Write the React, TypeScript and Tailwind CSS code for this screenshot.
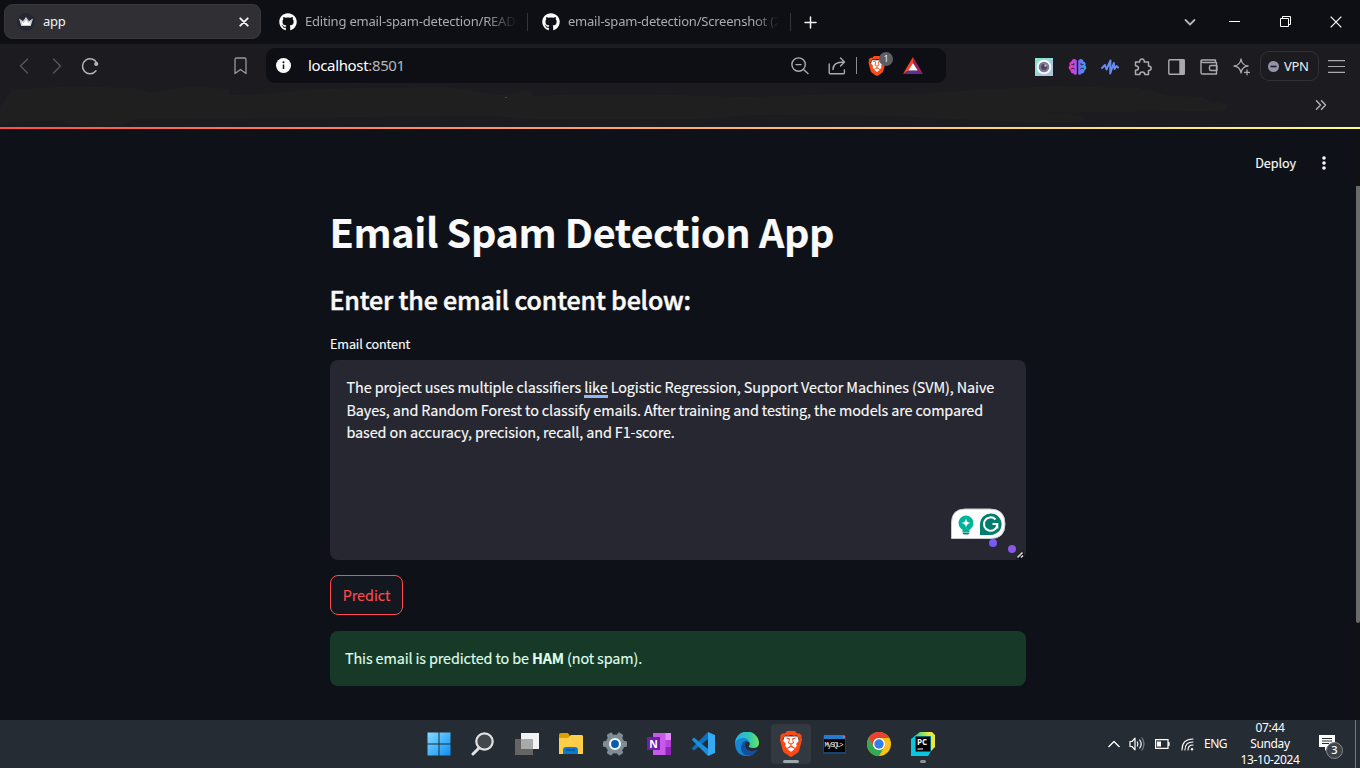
import type { ReactNode } from 'react';
import { FaGithub } from 'react-icons/fa';
import { SiBrave } from 'react-icons/si';

const stroke = { fill: 'none', stroke: 'currentColor', strokeLinecap: 'round', strokeLinejoin: 'round' } as const;

function Brave({ size }: { size: number }) {
  return (
    <svg width={size} height={size} viewBox="0 0 24 24">
      <path d="M6 5h12l1.500 5-3 9L12 22l-4.500-3-3-9z" fill="#fff" />
      <SiBrave size={24} color="#fb4a16" />
    </svg>
  );
}

function TabStrip() {
  return (
    <header className="flex h-11 shrink-0 items-start bg-[#0d0f14] font-['Noto_Sans','Open_Sans',sans-serif] text-[13px] text-[#a9abaf]">
      <div className="ml-1 mt-1 flex h-[35px] w-[257px] items-center rounded-[9px] bg-[#302f34] pl-[13px] text-[#f2f2f3] shadow-[inset_0_0_0_1px_#38383c]">
        <svg width="18" height="18" viewBox="0 0 18 18">
          <circle cx="9" cy="9" r="9" fill="#252633" />
          <path d="M2 5.500l4 2.500 3-4 3 4 4-2.500-2.200 7.500H4.200z" fill="#c9c9cc" />
          <path d="M4.500 9l2.300 1L9 7l2.200 3 2.300-1-1 3h-7z" fill="#fff" />
        </svg>
        <span className="ml-[8px] tracking-[-0.3px]">app</span>
        <svg className="ml-auto mr-[12px]" width="10" height="10" viewBox="0 0 10 10" {...stroke} strokeWidth="1.9"><path d="M1.300 1.300l7.400 7.400M8.700 1.300L1.300 8.700" /></svg>
      </div>
      <div className="mt-[13px] flex h-[18px] w-[266px] items-center pl-[18px]">
        <FaGithub size={18} color="#fff" className="shrink-0" />
        <span className="ml-[8px] w-[212px] whitespace-nowrap tracking-[-0.2px] [mask-image:linear-gradient(to_right,#000_85%,transparent)]">Editing email-spam-detection/READ</span>
      </div>
      <div className="mt-[13px] flex h-[18px] w-[263px] items-center border-l border-[#323438] pl-[14px]">
        <FaGithub size={18} color="#fff" className="shrink-0" />
        <span className="ml-[8px] w-[211px] whitespace-nowrap tracking-[-0.22px] [mask-image:linear-gradient(to_right,#000_88%,transparent)]">email-spam-detection/Screenshot (2</span>
      </div>
      <div className="mt-[13px] h-[18px] w-px bg-[#323438]" />
      <svg className="ml-[13px] mt-[15.500px] text-[#f2f2f2]" width="13" height="13" viewBox="0 0 13 13" {...stroke} strokeWidth="1.500"><path d="M6.500 1v11M1 6.500h11" /></svg>
      <div className="ml-auto mt-[15px] flex items-center text-white">
        <svg className="mr-[33px] text-[#b4b4b6]" width="12" height="14" viewBox="0 0 12 14" {...stroke} strokeWidth="1.800"><path d="M1.500 5l4.500 4.500L10.500 5" /></svg>
        <svg className="mr-[40px]" width="11" height="12" viewBox="0 0 11 12"><path d="M0 5.500h11" stroke="#fff" /></svg>
        <svg className="mr-[39px]" width="11" height="12" viewBox="0 0 11 12" fill="none" stroke="#fff"><path d="M.5 2.500h8v8h-8zM2.500 2V.5h8v8H9" /></svg>
        <svg className="mr-[18px]" width="12" height="12" viewBox="0 0 12 12" fill="none" stroke="#fff" strokeWidth="1.200"><path d="M.7.7l10.600 10.600M11.300.7L.7 11.300" /></svg>
      </div>
    </header>
  );
}

function Brain() {
  return (
    <svg width="19" height="18" viewBox="0 0 19 18">
      <defs><linearGradient id="brain"><stop offset="0" stopColor="#ff31b8" /><stop offset=".5" stopColor="#8d5cf6" /><stop offset="1" stopColor="#28a7f2" /></linearGradient></defs>
      <path d="M8.800 2.500C7-.3 3.600.9 3.500 3.500 1.500 4 .8 6 1.800 7.500.1 9 .6 11.600 2.500 12.200c-.2 2.500 1.600 3.600 3 3.300 1 2 3.300 1.500 3.300 0zM10.200 2.500c1.800-2.800 5.200-1.600 5.300 1 2 .5 2.700 2.500 1.700 4 1.700 1.500 1.200 4.100-.7 4.700.2 2.500-1.600 3.600-3 3.300-1 2-3.300 1.500-3.300 0z" fill="url(#brain)" />
      <path d="M3.500 6.500l2.500.3V5M3 11l2.500-1 1 1.500M15.500 6.500l-2.500.3V5M16 11l-2.500-1-1 1.500" stroke="#1c1b1f" fill="none" strokeWidth=".8" />
    </svg>
  );
}

function Ext({ children }: { children: ReactNode }) {
  return <div className="flex w-[33px] shrink-0 justify-center">{children}</div>;
}

function Toolbar() {
  return (
    <div className="flex h-[44px] shrink-0 items-center bg-[#1c1b1f] text-[#aaabae]">
      <div className="flex w-[266px] items-center text-[#56575b]">
        <svg className="ml-[19px]" width="10" height="16" viewBox="0 0 10 16" {...stroke} strokeWidth="1.400"><path d="M8.500 1L1.500 8l7 7" /></svg>
        <svg className="ml-[23px]" width="10" height="16" viewBox="0 0 10 16" {...stroke} strokeWidth="1.400"><path d="M1.500 1l7 7-7 7" /></svg>
        <svg className="ml-[19px] text-[#b4b5b7]" width="18" height="18" viewBox="0 0 18 18" {...stroke} strokeWidth="1.500"><path d="M15.800 6A7.500 7.500 0 1 0 15 13.800" /><circle cx="15.200" cy="7" r="2.100" fill="currentColor" stroke="none" /></svg>
        <svg className="ml-[135px] text-[#98999c]" width="13" height="18" viewBox="0 0 13 18" {...stroke} strokeWidth="1.300"><path d="M1 2.500Q1 1 2.500 1h8Q12 1 12 2.500V16.500l-5.500-4L1 16.500z" /></svg>
      </div>
      <div className="mb-px flex h-[35px] w-[680px] items-center rounded-[9px] bg-[#0d0f14] pl-[10px]">
        <svg width="15" height="15" viewBox="0 0 15 15"><circle cx="7.500" cy="7.500" r="7.500" fill="#fff" /><path d="M7.500 6.500v4.500" stroke="#0d0f14" strokeWidth="1.500" /><circle cx="7.500" cy="4.200" r="1" fill="#0d0f14" /></svg>
        <span className="mb-px ml-[17px] font-['Noto_Sans','Open_Sans',sans-serif] text-[15px] tracking-[-0.35px] text-white">localhost<span className="text-[#b5b6b8]">:8501</span></span>
        <div className="ml-auto flex items-center">
          <svg className="mr-[19px]" width="18" height="18" viewBox="0 0 18 18" {...stroke} strokeWidth="1.400"><circle cx="7.600" cy="7.600" r="6.700" /><path d="M12.500 12.500l4.500 4M5 7.600h5" /></svg>
          <svg className="mr-[10px]" width="18" height="18" viewBox="0 0 18 18" {...stroke} strokeWidth="1.400"><path d="M1.200 7v8.800q0 1 1 1h13.200q1 0 1-1V13M5 12.500C5 7 9 5 16 5M12.500 1l4 4-4 4" /></svg>
          <div className="mr-[10px] h-[17px] w-px bg-[#8c8d90]" />
          <div className="relative mr-[16px] h-[20px] w-[20px]">
            <Brave size={20} />
            <span className="absolute -top-[4px] left-[12px] flex h-[14px] w-[14px] items-center justify-center rounded-full bg-[#5b5d69] font-['Open_Sans',sans-serif] text-[9px] text-white">1</span>
          </div>
          <svg className="mr-[23px]" width="20" height="17" viewBox="0 0 20 17"><path d="M10 0L0 17l5.500-3.300L10 6z" fill="#ff4724" /><path d="M10 0l10 17-5.500-3.300L10 6z" fill="#9e1f63" /><path d="M0 17h20l-5.500-3.500h-9z" fill="#662d91" /><path d="M10 6l4.700 7.600H5.300z" fill="#fff" /></svg>
        </div>
      </div>
      <div className="ml-[81.500px] flex items-center pt-px">
        <Ext><svg width="18" height="18" viewBox="0 0 18 18"><rect width="18" height="18" fill="#a9c6df" /><path d="M0 0h18L0 18z" fill="#8ee2cd" /><circle cx="9" cy="9" r="7.300" fill="#f8f7fc" /><circle cx="9" cy="9" r="5.300" fill="#7f7892" /><circle cx="9" cy="9" r="3" fill="#4b455e" /><circle cx="10.500" cy="7.500" r="1.200" fill="#c1bdce" /></svg></Ext>
        <Ext><Brain /></Ext>
        <Ext><svg width="18" height="16" viewBox="0 0 18 16" {...stroke} stroke="#668cf5" strokeWidth="2"><path d="M1 9L4 6l1.500 4.500L9.500 1.500l-.3 13L12.800 4l.7 6L15.500 7l1.500 1.500" /></svg></Ext>
        <Ext><svg width="18" height="18" viewBox="0 0 18 18" {...stroke} strokeWidth="1.500"><path d="M1.500 4h4.200C5.200 0 10.800 0 10.300 4h4.200v4c3.500 0 3.500 4.500 0 4.500v4H10.800c0-3.300-5-3.300-5 0H1.500v-4.200c4-.3 4-4.300 0-4.600z" /></svg></Ext>
        <Ext><svg width="17" height="16" viewBox="0 0 17 16" {...stroke} strokeWidth="1.400"><rect x=".8" y=".8" width="15.400" height="14.400" rx="1" /><path d="M12 1h4v14h-4z" fill="currentColor" /></svg></Ext>
        <Ext><svg width="18" height="16" viewBox="0 0 18 16" {...stroke} strokeWidth="1.400"><path d="M16.500 5V3.500h-13Q1 3.500 1 2q0-1 1-1h13.500v2.500M1 2v11.500Q1 15 2.500 15h14V5M17 6.500h-6q-1.500 0-1.500 1.500v2q0 1.500 1.500 1.500h6z" /></svg></Ext>
        <Ext><svg width="18" height="18" viewBox="0 0 18 18" {...stroke} strokeWidth="1.300"><path d="M8 1q1 6.500 7 7-6 .5-7 7-1-6.500-7-7 6-.5 7-7zM14 11.800v5M11.500 14.300h5" /></svg></Ext>
      </div>
      <div className="ml-[1.500px] flex h-[30px] w-[59px] items-center rounded-[9px] border border-[#313237] pl-[7px] font-['Noto_Sans','Open_Sans',sans-serif] text-[13px] text-[#edeef1]">
        <svg width="11" height="11" viewBox="0 0 11 11"><circle cx="5.500" cy="5.500" r="5.500" fill="#9194a7" /><path d="M2.500 5.500h6" stroke="#1c1b1f" strokeWidth="1.600" /></svg>
        <span className="ml-[5px] pt-px tracking-[-0.3px]">VPN</span>
      </div>
      <svg className="ml-[9px]" width="17" height="13" viewBox="0 0 17 13" stroke="currentColor" strokeWidth="1.200"><path d="M0 .7h17M0 6.500h17M0 12.300h17" /></svg>
    </div>
  );
}

function BookmarksBar() {
  return (
    <div className="relative flex h-[39px] shrink-0 items-start justify-end bg-[#1c1b1f] pr-[33px] pt-[10.500px]">
      <svg className="absolute left-0 top-[-3px]" width="1360" height="42" viewBox="0 0 1360 42">
        <path d="M12 5Q60-1 132 3l20 5 38-7 40 3v6l30-1q70-8 190-7l50 8 30-5 4 6q40-3 150-1l60 2 90-3h70l110-6 40-2 85 2 28 7 35 2 10 5q15 1 15 5t-20 4l-170 2q50-1 47 7-5 5-45 3l-150-7-130-1-60 4h-170l-40-3-120 1-230 2-20 6q-30 6-60-4l-40 1-50 9q-25 0-27-7L0 30V22l4-6z" fill="#1f1f1f" />
        <path d="M505 12.500h2" stroke="#2d536c" />
      </svg>
      <svg width="12" height="12" viewBox="0 0 12 12" {...stroke} className="text-[#aeb0b2]" strokeWidth="1.500"><path d="M1.500 1.800L5.500 6l-4 4.200M6.500 1.800l4 4.200-4 4.200" /></svg>
    </div>
  );
}

function EmailApp() {
  return (
    <main className="flex min-h-0 flex-1 bg-[#0e1117] font-['Source_Sans_Pro','Noto_Sans_CJK_SC',sans-serif] text-[#fafafa] [-webkit-text-stroke:0.15px_currentColor]">
      <div className="w-[330px] shrink-0" />
      <div className="w-[696px] shrink-0 pt-[72px]">
        <h1 className="-ml-[0.500px] h-[60px] whitespace-nowrap text-[39.600px] font-bold leading-[60px] tracking-[-0.38px]">Email Spam Detection App</h1>
        <h2 className="-ml-[0.500px] mt-[18px] h-[40px] whitespace-nowrap text-[25px] font-medium leading-[40px] tracking-[-0.17px] [-webkit-text-stroke:0.5px_currentColor]">Enter the email content below:</h2>
        <label className="mt-[14px] block h-[22px] text-[12.600px] leading-[22px] tracking-[-0.1px]">Email content</label>
        <div className="relative mt-[5px] h-[200px] rounded-[8px] bg-[#262730] px-[16.500px] pt-[16px] text-[14.400px] leading-[22.600px] tracking-[-0.1px]">
          <p className="whitespace-nowrap">The project uses multiple classifiers <span className="relative">like<i className="absolute left-0 top-[19px] h-[3px] w-full bg-[#93b7f5]" /></span> Logistic Regression, Support Vector Machines (SVM), Naive<br />Bayes, and Random Forest to classify emails. After training and testing, the models are compared<br />based on accuracy, precision, recall, and F1-score.</p>
          <svg className="absolute bottom-0 right-0" width="80" height="56" viewBox="0 0 80 56">
            <path d="M5.500 34.500V19Q5.500 5 19 5H44Q59 5 59 20T44 34.500z" fill="#fff" stroke="#c9cad4" />
            <circle cx="20" cy="19" r="7.500" fill="#00b39b" /><path d="M16.500 24h7v4h-7z" fill="#00b39b" /><path d="M16.500 28.500h7q-.3 2-1.500 2h-4q-1.300 0-1.500-2z" fill="#008575" /><path d="M20 14.500q.5 4 4.500 4.500-4 .5-4.500 4.500-.5-4-4.500-4.500 4-.5 4.500-4.500z" fill="#fff" />
            <path d="M34 31V20a10.800 10.800 0 1 1 10.800 11z" fill="#027e6f" />
            <path d="M49.500 15.500A6.700 6.700 0 1 0 51.300 20H46.500M51.300 20v4.500" fill="none" stroke="#fff" strokeWidth="2" />
            <circle cx="47" cy="39" r="4" fill="#7b57f5" /><circle cx="66" cy="45" r="4" fill="#8b57e5" />
            <path d="M70 55l7-8 2 7-4 2z" fill="#111217" /><path d="M71.500 53.500l5-5M75 53.500l2-2" stroke="#d8d8d8" strokeWidth="1.600" />
          </svg>
        </div>
        <button className="mt-[15px] flex h-[40px] w-[73px] items-center justify-center rounded-[8px] border border-[#ff4b4b] bg-[#131720] text-[14.400px] tracking-[-0.05px] text-[#ff4b4b]">Predict</button>
        <div className="mt-[16px] flex h-[55px] items-center rounded-[8px] bg-[#173928] pb-px pl-[15px] text-[14.400px] tracking-[-0.13px] text-[#dffde9]"><p>This email is predicted to be <strong className="font-bold">HAM</strong> (not spam).</p></div>
      </div>
      <div className="flex flex-1 justify-end">
        <div className="mr-[30px] mt-[23px] flex h-[22px] items-center text-[12.600px] tracking-[-0.05px]">
          Deploy
          <svg className="ml-[26px]" width="4" height="14" viewBox="0 0 4 14" fill="#fafafa"><circle cx="2" cy="2" r="1.800" /><circle cx="2" cy="7" r="1.800" /><circle cx="2" cy="12" r="1.800" /></svg>
        </div>
        <div className="w-1 bg-[#101114] pt-[57px]"><div className="h-[437px] rounded-b-sm bg-[#6a6a6a]" /></div>
      </div>
    </main>
  );
}

const gear = [0, 60, 120, 180, 240, 300];

const taskIcons: ReactNode[] = [
  <svg width="24" height="24" viewBox="0 0 24 24"><defs><linearGradient id="win" x1="0" y1="0" x2="1" y2="1"><stop stopColor="#83dcff" /><stop offset="1" stopColor="#0c8ff5" /></linearGradient></defs><path d="M.5.5H11.500v11H.5zM12.500.5h11v11h-11zM.5 12.500h11v11H.5zM12.500 12.500h11v11h-11z" fill="url(#win)" /></svg>,
  <svg width="24" height="24" viewBox="0 0 24 24" fill="none" stroke="#e1e2e3"><circle cx="13.500" cy="9.500" r="8.200" strokeWidth="2.200" fill="#42474c" /><path d="M8 16l-6 6" strokeWidth="3" strokeLinecap="round" /></svg>,
  <svg width="26" height="24" viewBox="0 0 26 24"><path d="M7 1h18v16H7z" fill="#f2f2f2" /><path d="M1 7h18v16H1z" fill="#656565" /><path d="M7 7h12v10H7z" fill="#a9a9a9" /></svg>,
  <svg width="26" height="24" viewBox="0 0 26 24"><path d="M1 3q0-2 2-2h7l2 3h12v5H1z" fill="#e0a000" /><path d="M1 6h9l3-3h11l1 1v18H1z" fill="#ffce49" /><path d="M5 22v-4q0-3 3-3h9q3 0 3 3v4z" fill="#087bd2" /><path d="M8 18h9" stroke="#035aa3" strokeWidth="2" /></svg>,
  <svg width="24" height="24" viewBox="0 0 24 24"><circle cx="12" cy="12" r="9.500" fill="#808c95" />{gear.map((a) => <rect key={a} x="9" y="0" width="6" height="5" rx="1.500" fill="#808c95" transform={`rotate(${a + 30} 12 12)`} />)}<circle cx="12" cy="12" r="5" fill="#075cae" stroke="#f2f5f7" strokeWidth="2.200" /></svg>,
  <svg width="24" height="24" viewBox="0 0 24 24"><path d="M6 1h18v22H6z" fill="#c75ae9" /><path d="M18.500 1H24v7h-5.500z" fill="#e28bfa" /><path d="M18.500 8H24v7h-5.500z" fill="#b344d7" /><path d="M18.500 15H24v8h-5.500z" fill="#8b24b7" /><path d="M0 5h13v13H0z" fill="#711cad" /><text x="2.300" y="15.500" fill="#fff" fontFamily="Open Sans" fontWeight="700" fontSize="10.500">N</text></svg>,
  <svg width="24" height="24" viewBox="0 0 24 24"><path d="M17 0l7 3v18l-7 3z" fill="#35a9f1" /><path d="M17 0L1.500 15.500q-.8 1 0 1.700L3 18.500 17 7z" fill="#0b72c0" /><path d="M17 24L1.500 8.500q-.8-1 0-1.700L3 5.500 17 17z" fill="#188edc" /></svg>,
  <svg width="24" height="24" viewBox="0 0 24 24"><defs><linearGradient id="edge"><stop stopColor="#27acee" /><stop offset=".6" stopColor="#2fc8b2" /><stop offset="1" stopColor="#68e957" /></linearGradient></defs><path d="M0 12A12 12 0 0 1 24 11q0 5-6 5-5 0-4-2 2-3-1-5Q5 4 0 12z" fill="url(#edge)" /><path d="M0 12Q2 6 8 6q5 0 6 4-2-1-4 1-2 4 2 7 4 3 10 0-4 6-10 6Q1 24 0 12z" fill="#1784d4" /><path d="M10 23Q4 18 7 12q2-4 6-3-4 2-2.500 6Q13 21 22 18q-4 7-12 5z" fill="#124f9e" /></svg>,
  <Brave size={26} />,
  <svg width="23" height="19" viewBox="0 0 23 19"><path d="M0 1h23v18H0z" fill="#174470" /><path d="M1 0h21v4H1z" fill="#247cd0" /><path d="M20 1h2v2h-2z" fill="#ef6356" /><path d="M1 4h21v13H1z" fill="#030303" /><text x="1.500" y="11.500" fill="#f2f2f2" fontFamily="Liberation Mono" fontSize="7" textLength="19">MySQL&gt;</text></svg>,
  <svg width="24" height="24" viewBox="0 0 24 24"><circle cx="12" cy="12" r="12" fill="#fbc116" /><path d="M1.600 6A12 12 0 0 1 22.400 6H12a6 6 0 0 0-5.200 9z" fill="#e94235" /><path d="M1.600 6A12 12 0 0 0 12 24l5.200-9a6 6 0 0 1-10.400 0z" fill="#34a853" /><circle cx="12" cy="12" r="6" fill="#fff" /><circle cx="12" cy="12" r="4.700" fill="#357de8" /></svg>,
  <svg width="24" height="24" viewBox="0 0 24 24"><defs><linearGradient id="pc" x1="0" y1=".2" x2="1" y2="0"><stop stopColor="#21d789" /><stop offset=".7" stopColor="#e9e83f" /></linearGradient></defs><path d="M0 7l5-4h17v13l-5 8H0z" fill="#08c7e3" /><path d="M4 4l5-4h12l3 3v12l-4 4V4z" fill="url(#pc)" /><path d="M4.500 4.500h15v15h-15z" fill="#000" /><text x="6" y="12.500" fill="#fff" fontFamily="Open Sans" fontWeight="700" fontSize="8">PC</text><path d="M6.500 17h5.500" stroke="#fff" strokeWidth="1" /></svg>,
];

function Taskbar() {
  return (
    <footer className="flex h-12 shrink-0 items-center bg-[#262c33] font-['Noto_Sans','Open_Sans',sans-serif] text-[12px] text-white">
      <nav className="ml-[416.500px] flex h-full items-center">
        {taskIcons.map((icon, i) => (
          <div key={i} className="flex w-[44px] justify-center">
            <div className={i === 8 ? 'relative flex h-10 w-10 items-center justify-center rounded-[4px] bg-[#333940]' : 'relative flex h-10 w-10 items-center justify-center'}>
              {icon}
              {i === 8 && <i className="absolute bottom-[1px] h-[3px] w-4 rounded-full bg-[#9ca8af]" />}
              {i === 11 && <i className="absolute bottom-[1px] h-[3px] w-1.5 rounded-full bg-[#899197]" />}
            </div>
          </div>
        ))}
      </nav>
      <div className="ml-auto flex h-full items-center">
        <svg className="mr-[9px]" width="12" height="8" viewBox="0 0 12 8" {...stroke} strokeWidth="1.300" strokeLinecap="butt"><path d="M.5 7L6 1.500 11.500 7" /></svg>
        <svg className="mr-[9px]" width="17" height="14" viewBox="0 0 17 14" {...stroke} strokeWidth="1.200"><path d="M1 4.500h2l3-3.300v11.600l-3-3.300H1zM8.300 5q1.300 2 0 4M10.700 3q3 4 0 8" /><path d="M13 1q4 6 0 12" opacity=".4" /></svg>
        <svg className="mr-[11px]" width="15" height="10" viewBox="0 0 15 10"><path d="M.6.600h12.400v8.800H.6zM14 3v4" fill="none" stroke="#fff" strokeWidth="1.200" /><path d="M2 2.500h4v5H2z" fill="#fff" /></svg>
        <svg className="mr-[10px]" width="13" height="13" viewBox="0 0 13 13" {...stroke} strokeWidth="1.100"><path d="M1 12Q1 1 12 1M4 12Q4 4 12 4M7 12q0-5 5-5" /><circle cx="11" cy="11.200" r="1.200" fill="#fff" stroke="none" /></svg>
        <span className="w-[24px] tracking-[-0.5px]">ENG</span>
        <time className="ml-[12px] w-[60px] whitespace-nowrap text-center leading-[16px] tracking-[-0.35px]">07:44<br />Sunday<br />13-10-2024</time>
        <div className="relative ml-[19px] mt-[7px] h-[25px] w-[25px]">
          <svg width="17" height="16" viewBox="0 0 17 16"><path d="M0 0h16v12H9l-3 4v-4H0z" fill="#fff" /><path d="M3 3.500h10M3 6h10M3 8.500h7" stroke="#262c33" /></svg>
          <span className="absolute left-[7px] top-[7px] flex h-[17px] w-[17px] items-center justify-center rounded-full border border-[#858a8e] bg-[#3c4249] text-[11px] font-medium">3</span>
        </div>
        <div className="ml-[11px] mr-[4px] h-full w-px bg-[#737980]" />
      </div>
    </footer>
  );
}

export default function App() {
  return (
    <div className="flex h-[768px] w-[1360px] flex-col overflow-hidden bg-[#0e1117]">
      <TabStrip />
      <Toolbar />
      <BookmarksBar />
      <div className="relative z-10 h-0.5 shrink-0 bg-linear-to-r from-[#ff4b4b] to-[#fffd80]" />
      <EmailApp />
      <Taskbar />
    </div>
  );
}
